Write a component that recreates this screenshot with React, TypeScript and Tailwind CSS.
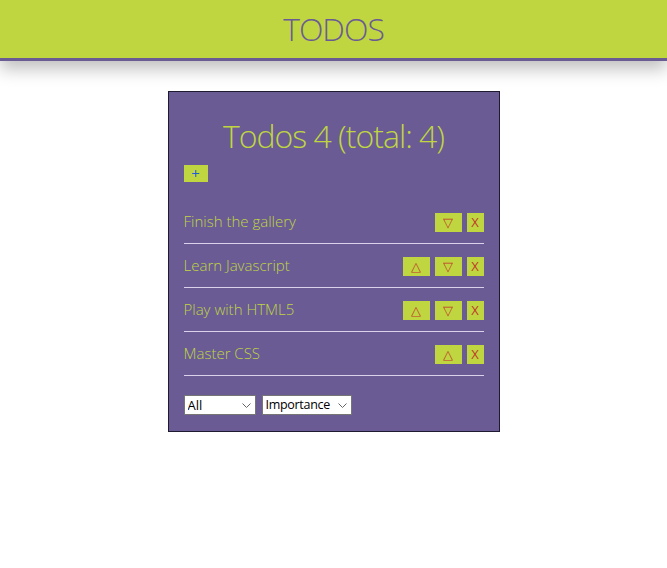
import React, { useState } from 'react'

type Todo = { id: number; title: string }

const initialTodos: Todo[] = [
  { id: 1, title: 'Finish the gallery' },
  { id: 2, title: 'Learn Javascript' },
  { id: 3, title: 'Play with HTML5' },
  { id: 4, title: 'Master CSS' },
]

function Chevron() {
  return (
    <svg width="9" height="5" viewBox="0 0 9 5" className="pointer-events-none absolute right-[5px] top-[8px]">
      <path d="M0.5 0.5 L4.5 4.5 L8.5 0.5" fill="none" stroke="#666" strokeWidth="1" />
    </svg>
  )
}

export default function App() {
  const [todos] = useState(initialTodos)

  return (
    <div className="min-h-[568px] bg-white font-['Open_Sans',sans-serif] font-light">
      {/* Header */}
      <header className="relative h-[61px] bg-[#bfd641] border-b-[3px] border-[#6b5b95] shadow-[0_8px_16px_rgba(0,0,0,0.25)] flex items-center justify-center">
        <h1 className="text-[32px] leading-none text-[#6b5b95] tracking-[-1px]">TODOS</h1>
      </header>

      {/* Panel */}
      <div className="mx-auto mt-[30px] w-[332px] bg-[#6b5b95] border border-[#1e1a30] px-[15px] pt-[24px] pb-[16px]">
        <h2 className="text-center text-[32px] leading-[40px] text-[#bfd641] tracking-[-1px]">
          Todos {todos.length} (total: {todos.length})
        </h2>
        <button className="mt-[9px] w-[24px] h-[17px] bg-[#bfd641] text-[#1d5fd6] text-[15px] leading-[17px] flex items-center justify-center font-normal">
          +
        </button>

        <ul className="mt-[18px]">
          {todos.map((todo, i) => (
            <li
              key={todo.id}
              className="h-[44px] border-b border-[#d9d2ea] flex items-center justify-between"
            >
              <span className="text-[15px] text-[#bfd641]">{todo.title}</span>
              <div className="flex items-center gap-[5px] pt-[1px]">
                {i > 0 && (
                  <button className="w-[27px] h-[19px] bg-[#bfd641] text-[#c0392b] text-[13px] leading-[19px] flex items-center justify-center font-['DejaVu_Sans',sans-serif]">
                    △
                  </button>
                )}
                {i < todos.length - 1 && (
                  <button className="w-[27px] h-[19px] bg-[#bfd641] text-[#c0392b] text-[13px] leading-[19px] flex items-center justify-center font-['DejaVu_Sans',sans-serif]">
                    ▽
                  </button>
                )}
                <button className="w-[17px] h-[19px] bg-[#bfd641] text-[#c0392b] text-[13px] leading-[19px] flex items-center justify-center font-normal">
                  X
                </button>
              </div>
            </li>
          ))}
        </ul>

        <div className="mt-[19px] flex gap-[6px]">
          <div className="relative flex">
            <select className="block appearance-none w-[72px] h-[20px] bg-white border border-[#767676] text-[13px] leading-[18px] pl-[3px] py-0 text-black font-normal rounded-none">
              <option>All</option>
            </select>
            <Chevron />
          </div>
          <div className="relative flex">
            <select className="block appearance-none w-[90px] h-[20px] bg-white border border-[#767676] text-[12.5px] tracking-[-0.3px] leading-[18px] pl-[3px] py-0 text-black font-normal rounded-none">
              <option>Importance</option>
            </select>
            <Chevron />
          </div>
        </div>
      </div>
    </div>
  )
}
